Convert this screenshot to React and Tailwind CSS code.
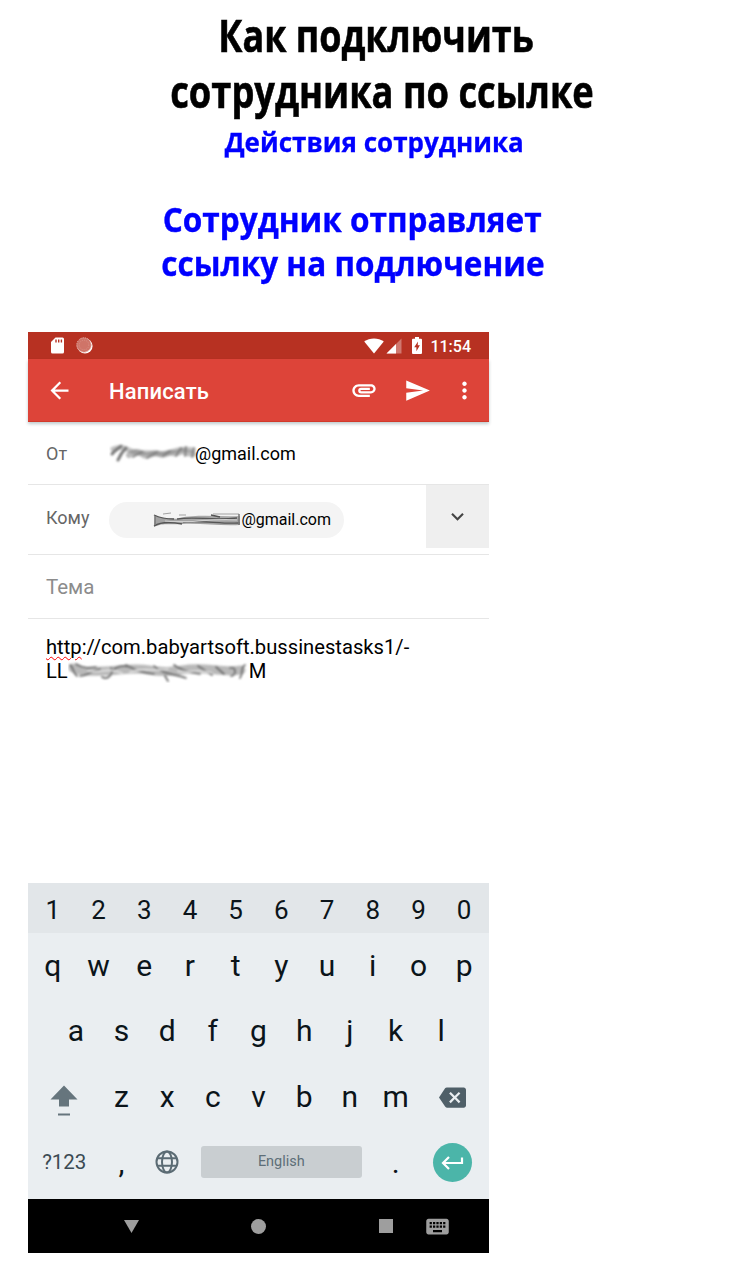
import React from "react";
import {
  MdArrowBack,
  MdAttachment,
  MdSend,
  MdMoreVert,
  MdExpandMore,
  MdBackspace,
  MdKeyboard,
  MdSdCard,
} from "react-icons/md";

const numbers = ["1", "2", "3", "4", "5", "6", "7", "8", "9", "0"];
const rowOne = ["q", "w", "e", "r", "t", "y", "u", "i", "o", "p"];
const rowTwo = ["a", "s", "d", "f", "g", "h", "j", "k", "l"];
const rowThree = ["z", "x", "c", "v", "b", "n", "m"];

function Headings() {
  return (
    <header className="h-[332px] whitespace-nowrap pt-[7px] font-['Open_Sans','Noto_Sans',sans-serif] font-bold">
      <h1 className="text-[44px] leading-[56px] text-black [-webkit-text-stroke:0.600px_#000]">
        <span className="ml-[219px] flex w-[315px] justify-center">
          <span className="scale-x-[0.817]">Как подключить</span>
        </span>
        <span className="ml-[170px] flex w-[423px] justify-center">
          <span className="scale-x-[0.824]">сотрудника по ссылке</span>
        </span>
      </h1>
      <p className="-mt-px ml-[225px] flex w-[299px] justify-center text-[27px] leading-[47px] text-[#0000ff] [-webkit-text-stroke:0.300px_#00f]">
        <span className="scale-x-[0.963]">Действия сотрудника</span>
      </p>
      <h2 className="mt-[32px] text-[34px] leading-[44px] text-[#0000ff] [-webkit-text-stroke:0.400px_#00f]">
        <span className="ml-[163px] flex w-[378px] justify-center">
          <span className="scale-x-[0.928]">Сотрудник отправляет</span>
        </span>
        <span className="ml-[161px] flex w-[383px] justify-center">
          <span className="scale-x-[0.926]">ссылку на подлючение</span>
        </span>
      </h2>
    </header>
  );
}

function StatusBar() {
  return (
    <div className="flex h-[27px] items-center bg-[#b73122] pl-[20px] pr-[18px] text-white">
      <svg className="h-[17px] w-[20px]" viewBox="0 0 20 17">
        <path d="M7.500 0.500H14.500a1.500 1.500 0 0 1 1.500 1.500V15a1.500 1.500 0 0 1-1.500 1.500H4.500A1.500 1.500 0 0 1 3 15V5z" fill="#fff" />
        <path d="M8 2.500v3M10.700 2.500v3M13.400 2.500v3" stroke="#b73122" strokeWidth="1.400" />
      </svg>
      <svg className="ml-[8px] size-[17px]" viewBox="0 0 17 17">
        <circle cx="9" cy="9" r="7.6" fill="#fff" />
        <circle cx="8" cy="8" r="7.2" fill="#cf7468" stroke="#e4b4ad" strokeWidth="1" strokeDasharray="1.4 0.9" />
        <circle cx="8" cy="8" r="4.8" fill="none" stroke="#d98f85" strokeWidth="1" strokeDasharray="1 1" />
      </svg>
      <div className="ml-auto flex items-center">
        <svg className="h-[16px] w-[20px]" viewBox="0 0 20 16">
          <path d="M10 15.6 0.2 3.6C3 1.500 6.300 0.400 10 0.400s7 1.100 9.800 3.200z" fill="#fff" />
        </svg>
        <svg className="ml-[2px] h-[16px] w-[16px]" viewBox="0 0 16 16">
          <path d="M0.500 15.500 15.500 0.500V15.500z" fill="#fff" opacity="0.35" />
          <path d="M0.500 15.500 10 6V15.500z" fill="#fff" />
        </svg>
        <svg className="ml-[10px] h-[17px] w-[10px]" viewBox="0 0 10 17">
          <path d="M3 0h4v1.700h2a1 1 0 0 1 1 1V16a1 1 0 0 1-1 1H1a1 1 0 0 1-1-1V2.700a1 1 0 0 1 1-1h2z" fill="#fff" />
          <path d="M6 4.500 2.200 10.200H4.400V14.300L7.900 8.300H5.700z" fill="#b73122" />
        </svg>
        <span className="ml-[8px] mt-[2px] text-[16px] font-medium leading-[25px]">11:54</span>
      </div>
    </div>
  );
}

function Toolbar() {
  return (
    <div className="relative flex h-[63px] items-center border-b border-[#d23a2b] bg-[#dd4439] pl-[18px] text-white shadow-[0_2px_3px_rgba(0,50,60,0.25)]">
      <MdArrowBack className="size-[27px]" />
      <span className="ml-[36px] mt-[3px] text-[22px] font-medium tracking-[0.150px]">Написать</span>
      <div className="ml-auto flex items-center pr-[11px]">
        <MdAttachment className="size-[28px]" />
        <MdSend className="ml-[26px] size-[27px]" />
        <MdMoreVert className="ml-[20px] size-[27px]" />
      </div>
    </div>
  );
}

function SmudgeFrom() {
  return (
    <svg className="h-[26px] w-[88px]" viewBox="0 0 88 26">
      <g fill="none" stroke="#777" strokeLinecap="round" className="blur-[1.200px]">
        <path d="M4 9c8-3 12-1 18 2s14 1 20 2 14 1 20-1 12-4 22-2" strokeWidth="5" opacity="0.450" />
        <path d="M3 14c3-4 6-5 9-8M9 20c2-5 5-9 8-12" strokeWidth="3" />
        <path d="M20 15c6-5 11-3 15 0s10-4 15-1 9-3 14-1 8-4 12-1 5 0 8 2" strokeWidth="6" opacity="0.500" />
        <path d="M24 17l9-5M38 18l10-6M54 16l7-5M67 16l5-8M76 16l1-9M83 17l2-9" strokeWidth="2" opacity="0.800" />
      </g>
    </svg>
  );
}

function SmudgeTo() {
  return (
    <svg className="h-[18px] w-[88px]" viewBox="0 0 88 18">
      <g fill="none" strokeLinecap="butt" className="blur-[0.600px]">
        <path d="M2 4c6 4 16 3 24 4h61v6c-20 1-40-2-58-1S10 12 1 16z" fill="#a2a2a2" />
        <path d="M26 7c20-4 40-1 61-2v4H26z" fill="#a8a8a8" />
        <path d="M1 4c6 3 12 4 20 4M1 15c8-5 18-4 28-2M30 11c20-2 36 2 57 1M24 8c20-3 34 2 60-1M58 4l9 2" stroke="#555" strokeWidth="1.300" />
        <path d="M10 3l8-1M26 4h7M60 3h26" stroke="#999" strokeWidth="0.900" />
        <path d="M12 10c20 3 44-3 72-1" stroke="#cfcfcf" strokeWidth="1.200" />
        <path d="M86 3v11M2 5v9" stroke="#777" strokeWidth="1.500" />
      </g>
    </svg>
  );
}

function SmudgeLink() {
  return (
    <svg className="h-[24px] w-[181px]" viewBox="0 0 181 24">
      <g fill="none" strokeLinecap="round" className="blur-[0.800px]">
        <path d="M5 9c10 5 20 3 32 3s28-4 44-1 24 1 40-1 38 4 52 1" stroke="#a8a8a8" strokeWidth="9" opacity="0.800" />
        <path d="M2 6c5 4 2 8 7 11M8 5c8 5 14 4 20 3M12 17c8 0 12-6 20-7M34 18c6 4 12-4 9-9M46 10c8-5 14-4 20 0M58 6c10 6 18 8 28 9M86 7c8 8 20 8 32 12M97 17l3 5M106 6c8 6 18 8 26 9M130 7l14 9M148 8l8 7M162 9c7-2 6 8 1 8M177 6c-5 2-1 8-5 13" stroke="#6c6c6c" strokeWidth="1.700" />
        <path d="M20 12c14 2 20-4 34 2M62 13c14-5 26 0 38-3M110 12c14 3 20-3 34 2" stroke="#e0e0e0" strokeWidth="1.800" />
      </g>
    </svg>
  );
}

function ComposeForm() {
  return (
    <div className="flex h-[461px] flex-col text-[18px] text-black">
      <div className="flex h-[63px] items-center border-b border-[#e6e6e6] pl-[18px]">
        <span className="w-[63px] text-[#666]">От</span>
        <div className="flex items-center">
          <SmudgeFrom />
          <span className="-ml-[2px] text-[18px]">@gmail.com</span>
        </div>
      </div>
      <div className="flex h-[70px] border-b border-[#e6e6e6] pl-[18px]">
        <span className="w-[63px] pt-[19px] leading-[27px] text-[#666]">Кому</span>
        <div className="mt-[17px] flex h-[36px] w-[235px] items-center justify-end rounded-full bg-[#f4f4f4] pr-[13px]">
          <SmudgeTo />
          <span className="text-[16px]">@gmail.com</span>
        </div>
        <div className="ml-auto flex h-[63px] w-[63px] items-center justify-center bg-[#efefef] text-[#444]">
          <MdExpandMore className="size-[25px]" />
        </div>
      </div>
      <div className="flex h-[64px] items-center border-b border-[#e6e6e6] pl-[18px] pt-[1px] text-[20.500px] text-[#8c8c8c]">
        Тема
      </div>
      <div className="pl-[18px] pt-[17px] text-[20.200px] leading-[23px]">
        <div>
          <span className="underline decoration-[#f00] decoration-wavy decoration-[1.200px] underline-offset-[2px]">http</span>
          ://com.babyartsoft.bussinestasks1/-
        </div>
        <div className="flex h-[24px] items-center">
          <span>LL</span>
          <SmudgeLink />
          <span>M</span>
        </div>
      </div>
    </div>
  );
}

function Keyboard() {
  return (
    <div className="h-[316px] bg-[#eaeef1] text-[30px] text-[#0b141a]">
      <div className="grid h-[50px] grid-cols-10 items-center bg-[#e2e6e9] px-[2px] pt-[4px] text-center text-[26px]">
        {numbers.map((k) => (
          <span key={k}>{k}</span>
        ))}
      </div>
      <div className="grid h-[64px] grid-cols-10 items-center px-[2px] text-center">
        {rowOne.map((k) => (
          <span key={k}>{k}</span>
        ))}
      </div>
      <div className="grid h-[66px] grid-cols-9 items-center px-[25px] text-center">
        {rowTwo.map((k) => (
          <span key={k}>{k}</span>
        ))}
      </div>
      <div className="grid h-[66px] grid-cols-20 items-center px-[2px] text-center">
        <span className="col-span-3 flex justify-center">
          <svg className="mt-[10px] h-[32px] w-[28px]" viewBox="0 0 28 32">
            <path d="M14 0.500 27.500 14.500H19V21.500H9V14.500H0.500z" fill="#66757d" />
            <path d="M8 28.500h12v2H8z" fill="#66757d" />
          </svg>
        </span>
        {rowThree.map((k) => (
          <span key={k} className="col-span-2">
            {k}
          </span>
        ))}
        <span className="col-span-3 flex justify-center">
          <MdBackspace className="mt-[2px] size-[27px] text-[#4f5f68]" />
        </span>
      </div>
      <div className="grid h-[66px] grid-cols-20 items-center px-[2px] text-center">
        <span className="col-span-3 text-[20.500px] text-[#3b4a53]">?123</span>
        <span className="col-span-2">,</span>
        <span className="col-span-2 flex justify-center">
          <svg className="size-[24px]" viewBox="0 0 24 24" fill="none" stroke="#5b6b74" strokeWidth="2">
            <circle cx="12" cy="12" r="10.500" />
            <ellipse cx="12" cy="12" rx="5" ry="10.500" />
            <path d="M2.500 8.200h19M2.500 15.800h19" />
          </svg>
        </span>
        <span className="col-span-8 ml-[11px] mr-[11px] flex h-[32px] items-center justify-center rounded-[3px] bg-[#c9ced1] text-[14.500px] text-[#5d6e78]">
          English
        </span>
        <span className="col-span-2">.</span>
        <span className="col-span-3 flex justify-center">
          <span className="flex size-[39px] items-center justify-center rounded-full bg-[#4bb5a9]">
            <svg className="size-[24px]" viewBox="0 0 24 24" fill="none" stroke="#fff" strokeWidth="2.200">
              <path d="M21 7.500v5.500H2.500M8 7 2 13l6 6" />
            </svg>
          </span>
        </span>
      </div>
    </div>
  );
}

function NavigationBar() {
  return (
    <div className="flex h-[54px] items-center bg-black pl-[96px] text-[#9e9e9e]">
      <svg className="h-[13px] w-[15px]" viewBox="0 0 15 13">
        <path d="M0 0h15L7.500 13z" fill="currentColor" />
      </svg>
      <span className="ml-[112px] size-[15px] rounded-full bg-[#9e9e9e]" />
      <span className="ml-[113px] size-[14px] bg-[#9e9e9e]" />
      <MdKeyboard className="ml-[31px] size-[27px]" />
    </div>
  );
}

export default function App() {
  return (
    <main className="h-[1275px] w-[750px] overflow-hidden bg-white">
      <Headings />
      <section className="ml-[28px] w-[461px] font-['Roboto',sans-serif]">
        <StatusBar />
        <Toolbar />
        <ComposeForm />
        <Keyboard />
        <NavigationBar />
      </section>
    </main>
  );
}
